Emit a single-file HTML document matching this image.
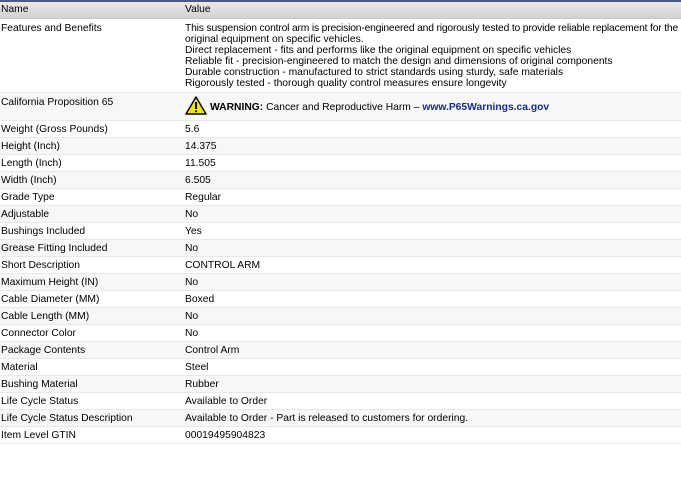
<!DOCTYPE html>
<html><head><style>
body{margin:0;width:681px;height:501px;background:#fff;font-family:"Liberation Sans",sans-serif;font-size:10.3px;color:#000;overflow:hidden}
table{border-collapse:collapse;width:681px;table-layout:fixed}
td,th{padding:0 0 0 1px;vertical-align:top;text-align:left;font-weight:normal;border-bottom:1px solid #e8e8e8;line-height:11px}
th{background:linear-gradient(#e9e9e9,#d2d2d2);border-top:2px solid #4a5a80;height:14px;padding-top:2px;border-bottom:1px solid #c8c8c8}
td{height:17px;padding-top:3px;box-sizing:border-box}
tr.a td{background:#f7f7f7}
td.c2,th.c2{padding-left:4px}
.w{font-weight:bold}
.l{color:#1a2a8a;font-weight:bold}
</style></head><body>
<table>
<col style="width:181px"><col>
<tr><th>Name</th><th class="c2">Value</th></tr>
<tr><td style="height:74px;padding-top:4px">Features and Benefits</td><td class="c2" style="padding-top:4px;white-space:nowrap"><span style="letter-spacing:-0.17px">This suspension control arm is precision-engineered and rigorously tested to provide reliable replacement for the</span><br>original equipment on specific vehicles.<br>Direct replacement - fits and performs like the original equipment on specific vehicles<br>Reliable fit - precision-engineered to match the design and dimensions of original components<br>Durable construction - manufactured to strict standards using sturdy, safe materials<br>Rigorously tested - thorough quality control measures ensure longevity</td></tr>
<tr class="a"><td style="height:28px;padding-top:4px">California Proposition 65</td><td class="c2" style="padding-top:3px"><svg width="22" height="19" viewBox="0 0 22 19" style="vertical-align:-5px;margin-right:3px"><path d="M11 1L21 18H1Z" fill="#f2e600" stroke="#000" stroke-width="1.5" stroke-linejoin="round"/><path d="M11 6v7" stroke="#000" stroke-width="2"/><circle cx="11" cy="15.3" r="1.1"/></svg><span class="w">WARNING:</span> Cancer and Reproductive Harm – <span class="l">www.P65Warnings.ca.gov</span></td></tr>
<tr><td>Weight (Gross Pounds)</td><td class="c2">5.6</td></tr>
<tr class="a"><td>Height (Inch)</td><td class="c2">14.375</td></tr>
<tr><td>Length (Inch)</td><td class="c2">11.505</td></tr>
<tr class="a"><td>Width (Inch)</td><td class="c2">6.505</td></tr>
<tr><td>Grade Type</td><td class="c2">Regular</td></tr>
<tr class="a"><td>Adjustable</td><td class="c2">No</td></tr>
<tr><td>Bushings Included</td><td class="c2">Yes</td></tr>
<tr class="a"><td>Grease Fitting Included</td><td class="c2">No</td></tr>
<tr><td>Short Description</td><td class="c2">CONTROL ARM</td></tr>
<tr class="a"><td>Maximum Height (IN)</td><td class="c2">No</td></tr>
<tr><td>Cable Diameter (MM)</td><td class="c2">Boxed</td></tr>
<tr class="a"><td>Cable Length (MM)</td><td class="c2">No</td></tr>
<tr><td>Connector Color</td><td class="c2">No</td></tr>
<tr class="a"><td>Package Contents</td><td class="c2">Control Arm</td></tr>
<tr><td>Material</td><td class="c2">Steel</td></tr>
<tr class="a"><td>Bushing Material</td><td class="c2">Rubber</td></tr>
<tr><td>Life Cycle Status</td><td class="c2">Available to Order</td></tr>
<tr class="a"><td>Life Cycle Status Description</td><td class="c2">Available to Order - Part is released to customers for ordering.</td></tr>
<tr><td>Item Level GTIN</td><td class="c2">00019495904823</td></tr>
</table>
</body></html>
